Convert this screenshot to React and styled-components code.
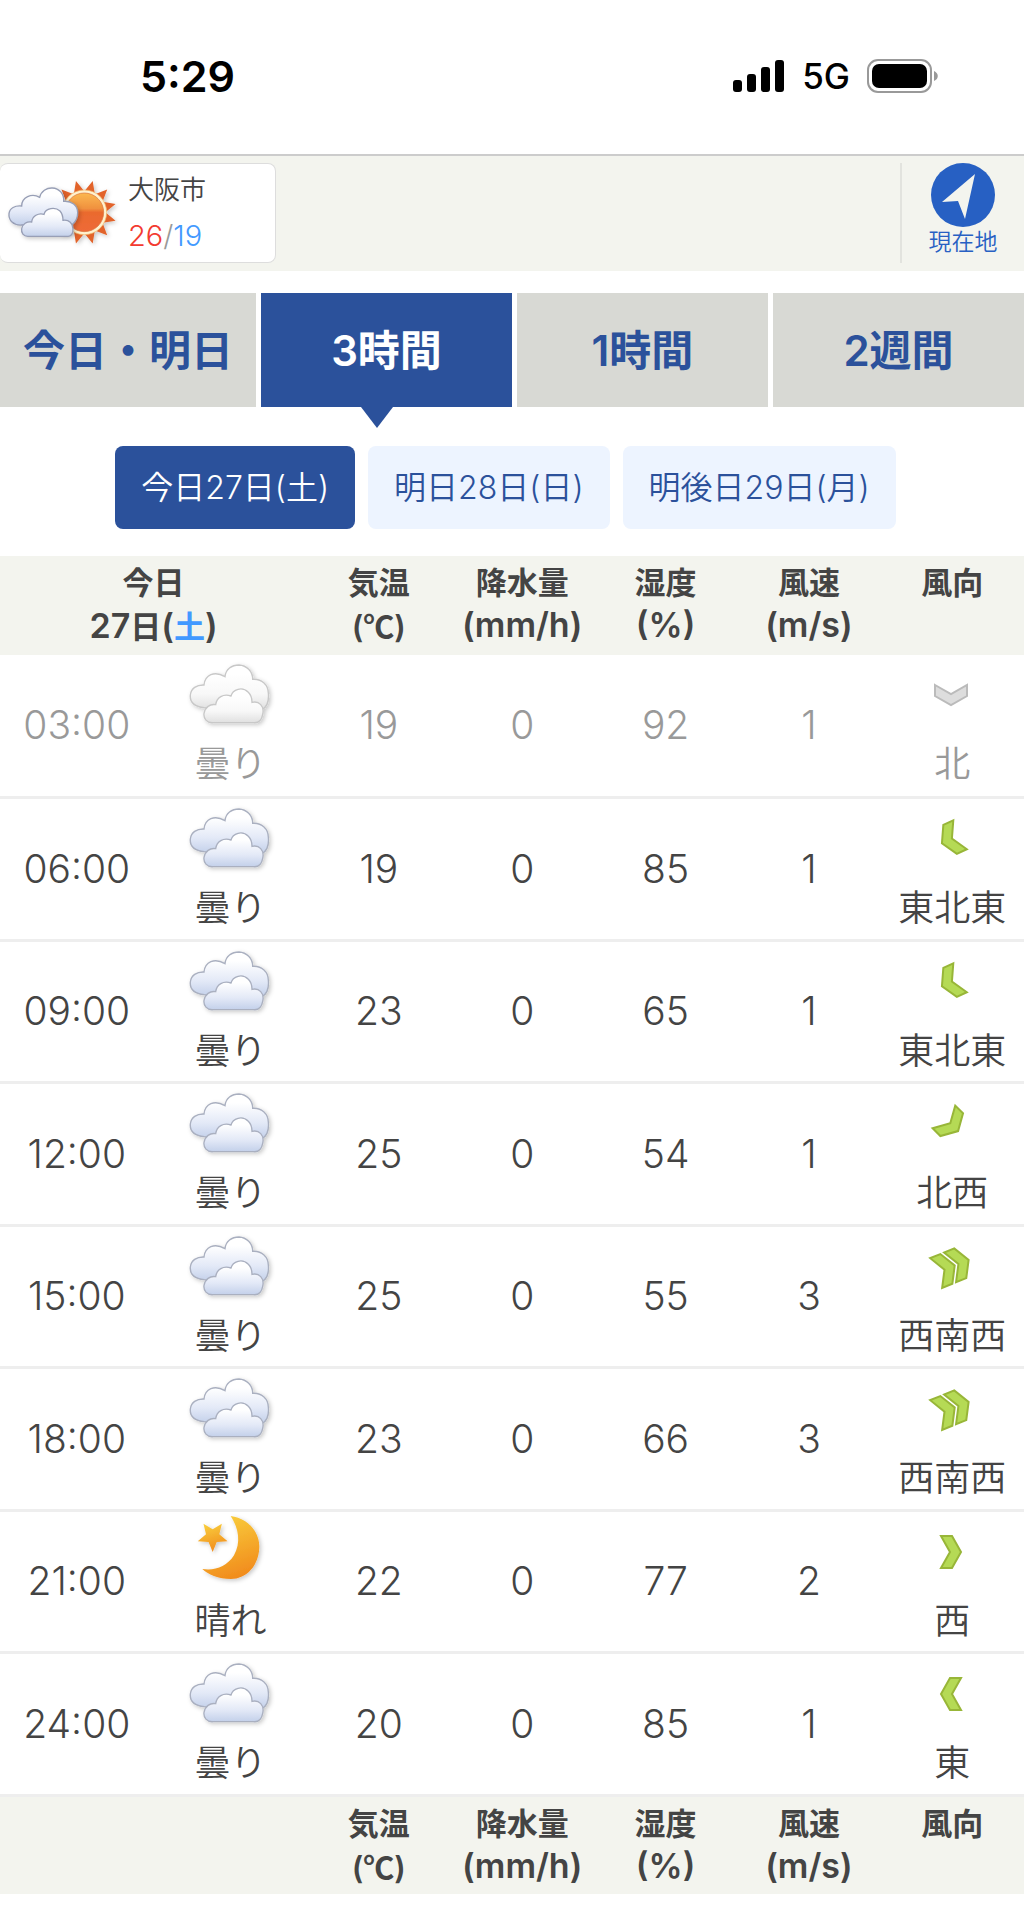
import React from "react";
import styled, { createGlobalStyle } from "styled-components";

const theme = {
  blue: "#2b519b",
  link: "#2760c3",
  saturday: "#4299ff",
  text: "#444",
  muted: "#999",
  strip: "#f3f4ee",
  tab: "#d8d9d4",
  pale: "#edf4ff",
};

const GlobalStyle = createGlobalStyle`
  * {
    box-sizing: border-box;
  }
  body {
    margin: 0;
    background: #fff;
    color: ${theme.text};
    font-family: Inter, "Noto Sans CJK JP", sans-serif;
    font-weight: 350;
  }
  a {
    color: inherit;
    text-decoration: none;
  }
`;

const StatusBar = styled.header`
  display: flex;
  align-items: center;
  justify-content: space-between;
  height: 156px;
  padding: 0 85px 2px 140px;
  border-bottom: 2px solid #ccc;
  color: #000;
`;
StatusBar.Time = styled.time`
  font-size: 43px;
  font-weight: 600;
`;
StatusBar.Icons = styled.div`
  display: flex;
  align-items: center;
  gap: 17px;
  font-size: 35px;
  font-weight: 500;
`;

const Places = styled.section`
  display: flex;
  justify-content: space-between;
  height: 115px;
  padding: 7px 0 8px;
  background: ${theme.strip};
`;
const City = styled.a`
  display: flex;
  align-items: center;
  gap: 8px;
  width: 27%;
  padding-left: 5px;
  border: 1px solid #ddd;
  border-left-width: 0;
  border-radius: 8px;
  background: #fff;
`;
City.Info = styled.div`
  display: flex;
  flex-direction: column;
  gap: 6px;
  line-height: 40px;
`;
City.Name = styled.span`
  font-size: 26px;
`;
City.Temps = styled.span`
  font-size: 29px;
  color: ${theme.muted};
`;
const High = styled.span`
  color: #f33a30;
`;
const Low = styled.span`
  color: ${theme.saturday};
`;

const Locate = styled.button`
  display: flex;
  flex-direction: column;
  align-items: center;
  width: 124px;
  padding: 0;
  border: 0;
  border-left: 2px solid #e2e3de;
  background: none;
  color: ${theme.link};
  font: inherit;
  font-size: 23px;
  line-height: 30px;
`;

const Tabs = styled.nav`
  display: grid;
  grid-template-columns: repeat(4, 1fr);
  margin-top: 22px;
`;
const Tab = styled.a`
  position: relative;
  display: flex;
  align-items: center;
  justify-content: center;
  height: 114px;
  padding-bottom: 6px;
  border-left: 5px solid #fff;
  background: ${(props) => (props.$active ? theme.blue : theme.tab)};
  color: ${(props) => (props.$active ? "#fff" : theme.blue)};
  font-size: 42px;
  font-weight: 600;

  &:first-child {
    border-left: 0;
  }
  &::after {
    content: "";
    display: ${(props) => (props.$active ? "block" : "none")};
    position: absolute;
    top: 100%;
    left: 40%;
    border: 16px solid transparent;
    border-top: 21px solid ${theme.blue};
    border-bottom: 0;
  }
`;

const Days = styled.nav`
  display: flex;
  justify-content: center;
  padding: 39px 0 27px;
`;
const Day = styled.a`
  margin-right: 13px;
  padding: 0 26px;
  border-radius: 8px;
  background: ${(props) => (props.$active ? theme.blue : theme.pale)};
  color: ${(props) => (props.$active ? "#fff" : theme.blue)};
  font-size: 32px;
  line-height: 83px;
`;

const Table = styled.table`
  width: 100%;
  table-layout: fixed;
  border-collapse: collapse;
  text-align: center;
`;
const Head = styled.th`
  height: 99px;
  padding: 6px 0 0;
  background: ${theme.strip};
  vertical-align: top;
  font-size: 31px;
  font-weight: 600;
  line-height: 42px;
  white-space: nowrap;
`;
const Unit = styled.span`
  font-size: 34px;
`;
const Kanji = styled.span`
  font-family: "Noto Sans CJK JP", sans-serif;
  font-size: 31px;
`;
const Row = styled.tr`
  height: ${(props) => (props.$tall ? 143 : 142)}px;
  border-bottom: 3px solid #eee;
  color: ${(props) => (props.$past ? theme.muted : theme.text)};
`;
const Value = styled.td`
  padding: 0;
  font-size: 39px;
  font-weight: 300;
  line-height: 48px;
`;
const Picture = styled.td`
  padding: 5px 0 0;
  vertical-align: top;
  font-size: 36px;
  line-height: 48px;
  white-space: nowrap;

  svg {
    display: block;
    margin: 0 auto;
    overflow: visible;
  }
`;

const Signal = () => (
  <svg width="52" height="34" viewBox="0 0 52 34">
    <rect x="0" y="21" width="9" height="12" rx="3" />
    <rect x="14" y="15" width="9" height="18" rx="3" />
    <rect x="28" y="8" width="9" height="25" rx="3" />
    <rect x="42" y="1" width="9" height="32" rx="3" />
  </svg>
);

const Battery = () => (
  <svg width="72" height="34" viewBox="0 0 72 34">
    <rect x="1" y="1" width="63" height="32" rx="10" fill="none" stroke="#999" strokeWidth="2" />
    <rect x="5" y="5" width="55" height="24" rx="7" />
    <path d="M67 12c5 2 5 8 0 10z" fill="#999" />
  </svg>
);

const LocateIcon = () => (
  <svg width="64" height="64" viewBox="0 0 64 64">
    <circle cx="32" cy="32" r="32" fill={theme.link} />
    <path d="M44 11 34 56 27 38 11 39z" fill={theme.strip} />
  </svg>
);

const CloudGradient = ({ id, grey }) => (
  <linearGradient id={id} x1="0" y1="0" x2="0" y2="1">
    <stop offset="0.2" stopColor="#fff" />
    <stop offset="0.65" stopColor={grey ? "#f8f8f8" : "#e3e9f7"} />
    <stop offset="1" stopColor={grey ? "#e0e0e0" : "#c3d0ea"} />
  </linearGradient>
);

const Shadow = ({ id }) => (
  <filter id={id} x="-20%" y="-20%" width="150%" height="150%">
    <feDropShadow dx="5" dy="5" stdDeviation="6" floodOpacity="0.22" />
  </filter>
);

const Clouds = ({ id, grey }) => (
  <svg width="90" height="80" viewBox="0 0 270 240">
    <defs>
      <CloudGradient id={`${id}-fill`} grey={grey} />
      <Shadow id={`${id}-shadow`} />
    </defs>
    <g
      fill={`url(#${id}-fill)`}
      stroke={grey ? "#c8c8c8" : "#aab0c0"}
      strokeWidth="4"
      filter={`url(#${id}-shadow)`}
    >
      <path d="M58 143C30 140 14 127 16 105C18 85 35 74 57 75C60 45 88 31 120 50C122 28 140 15 162 15C185 16 203 34 203 58C231 56 250 75 250 100C252 122 246 140 232 148Z" />
      <path d="M85 188C65 190 55 175 57 160C60 142 75 131 92 134C95 112 115 100 138 108C143 88 172 78 190 97C198 105 201 116 201 127C222 122 239 138 233 163C230 180 222 190 205 188Z" />
    </g>
  </svg>
);

const points = (count, outer, inner, turn) =>
  Array.from({ length: count * 2 }, (_, i) => {
    const r = i % 2 ? inner : outer;
    const a = ((i * 180) / count + turn) * (Math.PI / 180);
    return `${(r * Math.cos(a)).toFixed(1)},${(r * Math.sin(a)).toFixed(1)}`;
  }).join(" ");

const SunAndCloud = () => (
  <svg width="115" height="72" viewBox="0 0 345 216">
    <defs>
      <CloudGradient id="city-fill" />
      <Shadow id="city-shadow" />
      <linearGradient id="sun-fill" x1="0" y1="0" x2="0" y2="1">
        <stop offset="0" stopColor="#fbb850" />
        <stop offset="0.4" stopColor="#f0913f" />
        <stop offset="0.5" stopColor="#ea6a2e" />
        <stop offset="1" stopColor="#ee6a38" />
      </linearGradient>
    </defs>
    <g transform="translate(238 106)" filter="url(#city-shadow)">
      <polygon points={points(12, 97, 63, 15)} fill="#e2632b" />
      <circle r="67" fill="#fff2cf" stroke="#f2b667" strokeWidth="2" />
      <circle r="58" fill="url(#sun-fill)" stroke="#d9713a" strokeWidth="2" />
    </g>
    <g
      transform="translate(0 5)"
      fill="url(#city-fill)"
      stroke="#989fb6"
      strokeWidth="4"
      filter="url(#city-shadow)"
    >
      <path d="M50 139C25 141 10 125 12 105C14 88 30 80 50 82C50 56 80 42 104 56C108 38 125 27 142 28C162 29 178 45 176 68C200 66 218 80 218 102C218 118 212 128 204 136Z" />
      <path d="M70 173C55 174 48 162 50 150C52 135 66 128 80 130C82 112 100 102 117 107C122 88 150 84 165 97C172 105 174 115 174 125C192 122 204 135 204 150C205 165 198 174 188 173Z" />
    </g>
  </svg>
);

const MoonAndStar = ({ id }) => (
  <svg width="90" height="80" viewBox="0 0 270 240">
    <defs>
      <linearGradient id={`${id}-fill`} x1="0.3" y1="0" x2="0.6" y2="1">
        <stop offset="0" stopColor="#f9ce3c" />
        <stop offset="1" stopColor="#f18a1c" />
      </linearGradient>
      <Shadow id={`${id}-shadow`} />
    </defs>
    <g fill={`url(#${id}-fill)`} filter={`url(#${id}-shadow)`}>
      <path d="M137 -3C182 2 224 40 223 90C222 145 185 186 138 186C100 186 68 172 52 156C88 162 125 150 147 115C168 78 162 35 137 -3Z" />
      <polygon transform="translate(83 58)" points={points(5, 47, 21, 90)} />
    </g>
  </svg>
);

const CHEVRON = "-16,-10 0,-1 16,-10 16,1 0,10 -16,1";

// turn is clockwise from a wind that blows from the north
const Wind = ({ turn, strong, past }) => (
  <svg width="90" height="80" viewBox="-44 -35 90 80">
    <g
      transform={`rotate(${turn})`}
      fill={past ? "#ddd" : "#b5da55"}
      stroke={past ? "#bbb" : "#98b638"}
      strokeWidth="2"
    >
      {strong ? (
        <>
          <polygon points={CHEVRON} transform="translate(0 -6)" />
          <polygon points={CHEVRON} transform="translate(0 9)" />
        </>
      ) : (
        <polygon points={CHEVRON} />
      )}
    </g>
  </svg>
);

const hours = [
  { time: "03:00", sky: "曇り", temp: 19, rain: 0, humidity: 92, speed: 1, wind: "北", turn: 0, past: true },
  { time: "06:00", sky: "曇り", temp: 19, rain: 0, humidity: 85, speed: 1, wind: "東北東", turn: 65 },
  { time: "09:00", sky: "曇り", temp: 23, rain: 0, humidity: 65, speed: 1, wind: "東北東", turn: 65 },
  { time: "12:00", sky: "曇り", temp: 25, rain: 0, humidity: 54, speed: 1, wind: "北西", turn: -45 },
  { time: "15:00", sky: "曇り", temp: 25, rain: 0, humidity: 55, speed: 3, wind: "西南西", turn: -112 },
  { time: "18:00", sky: "曇り", temp: 23, rain: 0, humidity: 66, speed: 3, wind: "西南西", turn: -112 },
  { time: "21:00", sky: "晴れ", temp: 22, rain: 0, humidity: 77, speed: 2, wind: "西", turn: -90 },
  { time: "24:00", sky: "曇り", temp: 20, rain: 0, humidity: 85, speed: 1, wind: "東", turn: 90 },
];

const Headings = () => (
  <>
    <Head>
      気温
      <br />
      (<Kanji>℃</Kanji>)
    </Head>
    <Head>
      降水量
      <br />
      <Unit>(mm/h)</Unit>
    </Head>
    <Head>
      湿度
      <br />
      <Unit>(%)</Unit>
    </Head>
    <Head>
      風速
      <br />
      <Unit>(m/s)</Unit>
    </Head>
    <Head>風向</Head>
  </>
);

const Hour = ({ hour, index }) => (
  <Row $past={hour.past} $tall={index % 2 === 1}>
    <Value>{hour.time}</Value>
    <Picture>
      {hour.sky === "晴れ" ? (
        <MoonAndStar id={`sky${index}`} />
      ) : (
        <Clouds id={`sky${index}`} grey={hour.past} />
      )}
      {hour.sky}
    </Picture>
    <Value>{hour.temp}</Value>
    <Value>{hour.rain}</Value>
    <Value>{hour.humidity}</Value>
    <Value>{hour.speed}</Value>
    <Picture>
      <Wind turn={hour.turn} strong={hour.speed > 2} past={hour.past} />
      {hour.wind}
    </Picture>
  </Row>
);

export default () => (
  <>
    <GlobalStyle />
    <StatusBar>
      <StatusBar.Time>5:29</StatusBar.Time>
      <StatusBar.Icons>
        <Signal />
        5G
        <Battery />
      </StatusBar.Icons>
    </StatusBar>
    <Places>
      <City href="#osaka">
        <SunAndCloud />
        <City.Info>
          <City.Name>大阪市</City.Name>
          <City.Temps>
            <High>26</High>/<Low>19</Low>
          </City.Temps>
        </City.Info>
      </City>
      <Locate type="button">
        <LocateIcon />
        現在地
      </Locate>
    </Places>
    <main>
      <Tabs>
        <Tab href="#today">今日・明日</Tab>
        <Tab href="#3hours" $active>
          3時間
        </Tab>
        <Tab href="#1hour">1時間</Tab>
        <Tab href="#2weeks">2週間</Tab>
      </Tabs>
      <Days>
        <Day href="#day27" $active>
          今日27日(土)
        </Day>
        <Day href="#day28">明日28日(日)</Day>
        <Day href="#day29">明後日29日(月)</Day>
      </Days>
      <Table>
        <colgroup>
          <col style={{ width: "15%" }} />
          <col style={{ width: "15%" }} />
          <col span="5" style={{ width: "14%" }} />
        </colgroup>
        <thead>
          <tr>
            <Head colSpan="2">
              今日
              <br />
              <Unit>
                27<Kanji>日</Kanji>(
                <Low>
                  <Kanji>土</Kanji>
                </Low>
                )
              </Unit>
            </Head>
            <Headings />
          </tr>
        </thead>
        <tbody>
          {hours.map((hour, index) => (
            <Hour key={hour.time} hour={hour} index={index} />
          ))}
        </tbody>
        <tfoot>
          <tr>
            <Head colSpan="2" />
            <Headings />
          </tr>
        </tfoot>
      </Table>
    </main>
  </>
);
